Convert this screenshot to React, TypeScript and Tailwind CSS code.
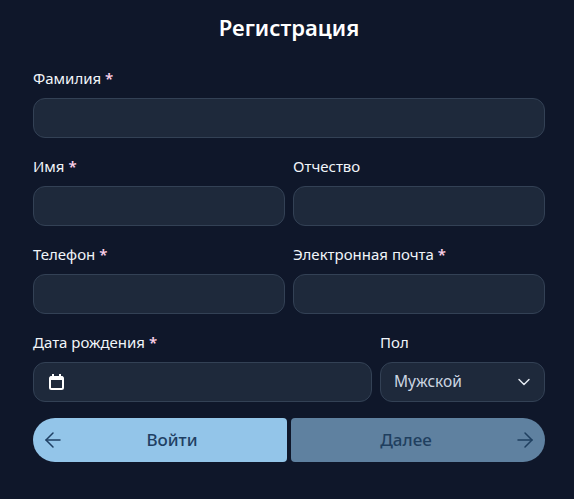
import { ArrowLeft, ArrowRight, ChevronDown } from "lucide-react";

function Label({ text, required }: { text: string; required?: boolean }) {
  return (
    <label className="block h-[20px] text-[15px] leading-[20px] text-[#f1f5f9]">
      {text}
      {required && <span className="text-[#fbcfe8] font-semibold"> *</span>}
    </label>
  );
}

function Field({ label, required, className }: { label: string; required?: boolean; className?: string }) {
  return (
    <div className={className}>
      <Label text={label} required={required} />
      <input className="mt-[10px] block h-[40px] w-full rounded-[12px] border border-[#334155] bg-[#1e293b] outline-none" />
    </div>
  );
}

export default function App() {
  return (
    <div className="min-h-[499px] bg-[#0f172a] pl-[33px] pr-[29px] font-['Noto_Sans','Open_Sans',sans-serif]">
      <h1 className="pt-[12px] text-center text-[22px] leading-[30px] font-semibold text-white">Регистрация</h1>

      <div className="mt-[26px] flex flex-col gap-[18px]">
        <Field label="Фамилия" required />

        <div className="grid grid-cols-2 gap-[8px]">
          <Field label="Имя" required />
          <Field label="Отчество" />
        </div>

        <div className="grid grid-cols-2 gap-[8px]">
          <Field label="Телефон" required />
          <Field label="Электронная почта" required />
        </div>

        <div className="flex gap-[8px]">
          <div className="flex-1">
            <Label text="Дата рождения" required />
            <div className="mt-[10px] flex h-[40px] items-center rounded-[12px] border border-[#334155] bg-[#1e293b] pl-[15px]">
              <svg width="15" height="16" viewBox="0 0 15 16" fill="none">
                <rect x="1" y="3" width="13" height="12" rx="1.5" stroke="#fff" strokeWidth="2" />
                <rect x="1" y="2.5" width="13" height="3.5" fill="#fff" />
                <rect x="3" y="0" width="2" height="3" fill="#fff" />
                <rect x="10" y="0" width="2" height="3" fill="#fff" />
              </svg>
            </div>
          </div>
          <div className="w-[165px]">
            <Label text="Пол" />
            <div className="mt-[10px] flex h-[40px] items-center justify-between rounded-[12px] border border-[#334155] bg-[#1e293b] pl-[13px] pr-[10px] text-[15.5px] text-[#cbd5e1]">
              Мужской
              <ChevronDown size={20} strokeWidth={1.75} className="text-[#e2e8f0]" />
            </div>
          </div>
        </div>
      </div>

      <div className="mt-[16px] flex gap-[4px]">
        <button className="flex h-[44px] flex-1 items-center rounded-l-[22px] rounded-r-[4px] bg-[#93c5e9] px-[8px] text-[17px] font-medium text-[#1f3f63]">
          <ArrowLeft size={24} strokeWidth={1.5} />
          <span className="flex-1 text-center">Войти</span>
        </button>
        <button disabled className="flex h-[44px] flex-1 items-center rounded-l-[4px] rounded-r-[22px] bg-[#5f81a0] px-[8px] text-[17px] font-medium text-[#1f3f5f]">
          <span className="flex-1 text-center">Далее</span>
          <ArrowRight size={24} strokeWidth={1.5} />
        </button>
      </div>
    </div>
  );
}
